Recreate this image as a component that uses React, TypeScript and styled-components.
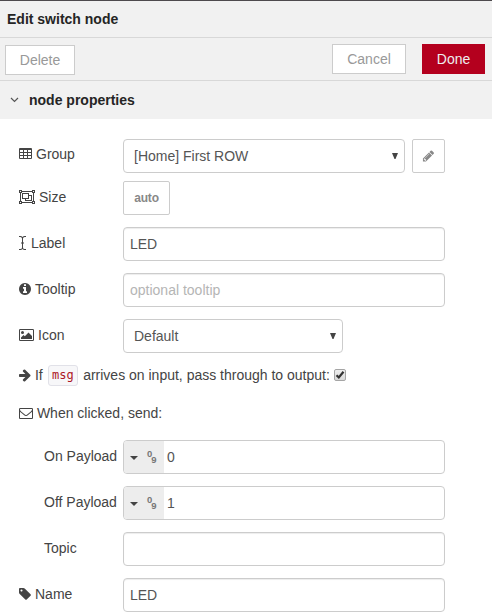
import React from 'react';
import styled, { createGlobalStyle } from 'styled-components';

const GlobalStyle = createGlobalStyle`
  *, *::before, *::after { box-sizing: border-box; }
  body {
    margin: 0;
    background: #fff;
    color: #444;
    font: 14px/20px "Liberation Sans", Arial, sans-serif;
  }
  input, button { font: inherit; }
`;

const Tray = styled.div`
  height: 616px;
  overflow: hidden;
  border-top: 1px solid #4d4a4d;
`;

const Title = styled.header`
  height: 37px;
  padding: 8px 7px;
  background: #f1f1f1;
  border-bottom: 1px solid #d8d8d8;
  color: #252525;
  font-weight: bold;
`;

const Toolbar = styled.div`
  display: flex;
  align-items: flex-start;
  height: 43px;
  padding: 6px 7px 0 5px;
  background: #f1f1f1;
  border-bottom: 1px solid #d8d8d8;
`;

const Button = styled.button<{ $primary?: boolean; $width: number }>`
  width: ${p => p.$width}px;
  height: 30px;
  padding: 0;
  border: 1px solid ${p => (p.$primary ? '#b4001e' : '#ccc')};
  background: ${p => (p.$primary ? '#b4001e' : '#fff')};
  color: ${p => (p.$primary ? '#eee' : '#999')};
`;

const DeleteButton = styled(Button)`
  margin: 1px auto 0 0;
`;

const DoneButton = styled(Button)`
  margin-left: 16px;
`;

const SectionHeader = styled.div`
  display: flex;
  align-items: center;
  gap: 10px;
  height: 38px;
  padding-left: 10px;
  background: #f1f1f1;
  color: #252525;
  font-weight: bold;
`;

const Form = styled.form`
  padding: 20px 47px 0 19px;
`;

const Row = styled.div<{ $gap?: number }>`
  display: flex;
  align-items: center;
  height: 34px;
  margin-bottom: ${p => p.$gap ?? 12}px;
`;

const Label = styled.label<{ $nested?: boolean; $raise?: number; $gap?: number }>`
  display: flex;
  align-items: center;
  gap: ${p => p.$gap ?? 4}px;
  flex: 0 0 104px;
  padding-left: ${p => (p.$nested ? 25 : 0)}px;
  margin-top: -${p => p.$raise ?? 2}px;
  white-space: nowrap;
`;

const Line = styled.div<{ $gap: number }>`
  display: flex;
  align-items: center;
  height: 20px;
  margin-bottom: ${p => p.$gap}px;
  white-space: pre;
`;

const Glyph = styled.svg`
  display: block;
  flex: none;
  height: 14px;
  fill: currentColor;
`;

const TextInput = styled.input`
  width: 322px;
  height: 34px;
  padding: 0 6px;
  border: 1px solid #ccc;
  border-radius: 4px;
  background: #fff;
  box-shadow: inset 0 1px 1px rgba(0, 0, 0, 0.075);
  color: #555;
  outline: none;
  &::placeholder { color: #b5b5b5; opacity: 1; }
`;

const Select = styled.div<{ $width: number }>`
  display: flex;
  align-items: center;
  justify-content: space-between;
  width: ${p => p.$width}px;
  height: 34px;
  padding: 0 6px 0 10px;
  border: 1px solid #ccc;
  border-radius: 4px;
  color: #555;
`;

const SmallButton = styled.button<{ $width: number; $left?: number }>`
  display: flex;
  align-items: center;
  justify-content: center;
  width: ${p => p.$width}px;
  height: 34px;
  margin-left: ${p => p.$left ?? 0}px;
  padding: 0;
  border: 1px solid #ccc;
  border-radius: 2px;
  background: #fff;
  color: #888;
  font-size: 12px;
  font-weight: bold;
  letter-spacing: -0.15px;
`;

const TypedInput = styled.div`
  display: flex;
  width: 322px;
  height: 34px;
  border: 1px solid #ccc;
  border-radius: 4px;
  overflow: hidden;
`;

const TypeMenu = styled.span`
  display: flex;
  align-items: center;
  gap: 9px;
  width: 40px;
  padding: 2px 0 0 6px;
  background: #ededed;
`;

const Digits = styled.span`
  display: flex;
  width: 12px;
  height: 18px;
  color: #777;
  font-size: 9.5px;
  font-weight: bold;
  line-height: 10px;
`;

const LowDigit = styled.span`
  margin-top: 6px;
  margin-left: -1px;
`;

const TypedValue = styled.span`
  padding: 6px 3px;
  color: #555;
`;

const Code = styled.code`
  height: 21px;
  margin: 1px 1px 0 1px;
  padding: 0 3.5px;
  border: 1px solid #e1e1e8;
  border-radius: 3px;
  background: #f7f7f9;
  color: #ad1625;
  font: 12px/18px "DejaVu Sans Mono", monospace;
`;

const CheckBox = styled.span`
  display: flex;
  width: 12px;
  height: 12px;
  margin-left: 4px;
  border: 1px solid #a5a5a5;
  border-radius: 2px;
  background: linear-gradient(#eee, #d9d9d9);
`;

const Mark = styled.svg`
  display: block;
  flex: none;
`;

const TableIcon = () => (
  <Glyph width="13" viewBox="0 1 13 14">
    <path fillRule="evenodd" d="M1 2h11a1 1 0 0 1 1 1v9a1 1 0 0 1-1 1H1a1 1 0 0 1-1-1V3a1 1 0 0 1 1-1zM1 4v2h3v-2zM5 4v2h3v-2zM9 4v2h3v-2zM1 7v2h3v-2zM5 7v2h3v-2zM9 7v2h3v-2zM1 10v2h3v-2zM5 10v2h3v-2zM9 10v2h3v-2z" />
  </Glyph>
);

const GroupIcon = () => (
  <Glyph width="16" viewBox="0 0 16 14">
    <path fillRule="evenodd" d="M0 0h3v1h10V0h3v3h-1v8h1v3h-3v-1H3v1H0v-3h1V3H0zM3 2v1H2v8h1v1h10v-1h1V3h-1V2zM1 1v1h1V1zM14 1v1h1V1zM1 12v1h1v-1zM14 12v1h1v-1zM3 3h7v2h3v6H6V9H3zM4 4v4h5V4zM10 6v3H7v1h5V6z" />
  </Glyph>
);

const CursorIcon = () => (
  <Glyph width="7" viewBox="0 0 7 14">
    <path d="M0 0h1.3Q2.8 0 3.5.9 4.2 0 5.7 0H7v1H5.7Q4 1 4 2.6V6.5h1v1H4v3.9Q4 13 5.7 13H7v1H5.7q-1.500 0-2.200-.9-.7.9-2.200.9H0v-1h1.300Q3 13 3 11.400V7.500H2v-1h1V2.600Q3 1 1.300 1H0z" />
  </Glyph>
);

const InfoIcon = () => (
  <Glyph width="12" viewBox="128 0 1536 1792">
    <path d="M1152 1376v-160q0-14-9-23t-23-9h-96v-512q0-14-9-23t-23-9h-320q-14 0-23 9t-9 23v160q0 14 9 23t23 9h96v320h-96q-14 0-23 9t-9 23v160q0 14 9 23t23 9h448q14 0 23-9t9-23zm-128-896v-160q0-14-9-23t-23-9h-192q-14 0-23 9t-9 23v160q0 14 9 23t23 9h192q14 0 23-9t9-23zm640 416q0 209-103 385.500t-279.500 279.500-385.500 103-385.500-103-279.500-279.500-103-385.500 103-385.500 279.500-279.500 385.500-103 385.500 103 279.500 279.500 103 385.500z" />
  </Glyph>
);

const PictureIcon = () => (
  <Glyph width="15" viewBox="0 0 15 14">
    <path fillRule="evenodd" d="M1.200 1h12.600Q15 1 15 2.200v9.600q0 1.200-1.200 1.200H1.200Q0 13 0 11.800V2.200Q0 1 1.200 1zM1.200 2q-.2 0-.2.200v9.600q0 .2.200.2h12.600q.2 0 .2-.2V2.200q0-.2-.2-.2z" />
    <circle cx="3.500" cy="4.500" r="1.500" />
    <path d="M2 11V9.500L4.500 7l1.300 1.200L9.500 4.500 13 8v3z" />
  </Glyph>
);

const ArrowIcon = () => (
  <Glyph width="12" viewBox="128 0 1536 1792">
    <path d="M1600 960q0 54-37 91l-651 651q-39 37-91 37-51 0-90-37l-75-75q-38-38-38-91t38-91l293-293h-704q-52 0-84.500-37.500t-32.500-90.500v-128q0-53 32.500-90.500t84.500-37.500h704l-293-294q-38-36-38-90t38-90l75-75q38-38 90-38 53 0 91 38l651 651q37 35 37 90z" />
  </Glyph>
);

const EnvelopeIcon = () => (
  <Glyph width="14" viewBox="0 0 1792 1792">
    <path d="M1664 1504v-768q-32 36-69 66-268 206-426 338-51 43-83 67t-86.500 48.500-102.500 24.500h-2q-48 0-102.500-24.500t-86.500-48.500-83-67q-158-132-426-338-37-30-69-66v768q0 13 9.500 22.500t22.500 9.500h1472q13 0 22.500-9.500t9.500-22.500zm0-1051v-24.500l-.5-13-3-12.500-5.500-9-9-7.500-14-2.500h-1472q-13 0-22.500 9.500t-9.500 22.500q0 168 147 284 193 152 401 317 6 5 35 29.500t46 37.500 44.500 31.500 50.500 27.500 43 9h2q20 0 43-9t50.500-27.500 44.500-31.500 46-37.500 35-29.500q208-165 401-317 54-43 100.500-115.500t46.500-131.500zm128-37v1088q0 66-47 113t-113 47h-1472q-66 0-113-47t-47-113v-1088q0-66 47-113t113-47h1472q66 0 113 47t47 113z" />
  </Glyph>
);

const TagIcon = () => (
  <Glyph width="12" viewBox="128 0 1536 1792">
    <path d="M576 448q0-53-37.500-90.500t-90.500-37.500-90.500 37.500-37.500 90.500 37.500 90.500 90.500 37.500 90.500-37.500 37.500-90.500zm1067 576q0 53-37 90l-491 492q-39 37-91 37-53 0-90-37l-715-716q-38-37-64.500-101t-26.500-117v-416q0-52 38-90t90-38h416q53 0 117 26.500t102 64.500l715 714q37 39 37 91z" />
  </Glyph>
);

const PencilIcon = () => (
  <Mark width="14" height="14" viewBox="0 0 1920 1792" fill="currentColor">
    <path d="M491 1536l91-91-235-235-91 91v107h128v128h107zm523-928q0-22-22-22-10 0-17 7l-542 542q-7 7-7 17 0 22 22 22 10 0 17-7l542-542q7-7 7-17zm-54-192l416 416-832 832h-416v-416zm683 96q0 53-37 90l-166 166-416-416 166-165q36-38 90-38 53 0 91 38l235 234q37 39 37 91z" />
  </Mark>
);

const ChevronIcon = () => (
  <Mark width="9" height="6" viewBox="0 0 9 6" fill="none" stroke="#555" strokeWidth="1.200">
    <path d="M1 1l3.500 3.500L8 1" />
  </Mark>
);

const SelectArrow = () => (
  <Mark width="6" height="6" viewBox="0 0 6 6" fill="#444">
    <path d="M0 0h6L3.500 6h-1z" />
  </Mark>
);

const Typed = ({ value }: { value: string }) => (
  <TypedInput>
    <TypeMenu>
      <Mark width="8" height="4" viewBox="0 0 8 4" fill="#444"><path d="M0 0h8L4 4z" /></Mark>
      <Digits><span>0</span><LowDigit>9</LowDigit></Digits>
    </TypeMenu>
    <TypedValue>{value}</TypedValue>
  </TypedInput>
);

export default function App() {
  return (
    <>
      <GlobalStyle />
      <Tray>
        <Title>Edit switch node</Title>
        <Toolbar>
          <DeleteButton $width={70}>Delete</DeleteButton>
          <Button $width={74}>Cancel</Button>
          <DoneButton $primary $width={63}>Done</DoneButton>
        </Toolbar>
        <SectionHeader><ChevronIcon />node properties</SectionHeader>
        <Form>
          <Row $gap={8}>
            <Label $raise={4}><TableIcon />Group</Label>
            <Select $width={282}>[Home] First ROW<SelectArrow /></Select>
            <SmallButton type="button" $width={33} $left={7}><PencilIcon /></SmallButton>
          </Row>
          <Row>
            <Label><GroupIcon />Size</Label>
            <SmallButton type="button" $width={47}>auto</SmallButton>
          </Row>
          <Row>
            <Label $gap={5}><CursorIcon />Label</Label>
            <TextInput defaultValue="LED" />
          </Row>
          <Row>
            <Label><InfoIcon />Tooltip</Label>
            <TextInput placeholder="optional tooltip" />
          </Row>
          <Row>
            <Label><PictureIcon />Icon</Label>
            <Select $width={220}>Default<SelectArrow /></Select>
          </Row>
          <Line $gap={18}>
            <ArrowIcon />
            <span> If </span>
            <Code>msg</Code>
            <span> arrives on input, pass through to output:</span>
            <CheckBox>
              <Mark width="10" height="10" viewBox="0 0 10 10" fill="none" stroke="#333" strokeWidth="2.200">
                <path d="M1.500 5.300l2.300 2.200L8.500 1.700" />
              </Mark>
            </CheckBox>
          </Line>
          <Line $gap={17}><EnvelopeIcon /><span> When clicked, send:</span></Line>
          <Row>
            <Label $nested>On Payload</Label>
            <Typed value="0" />
          </Row>
          <Row>
            <Label $nested>Off Payload</Label>
            <Typed value="1" />
          </Row>
          <Row>
            <Label $nested>Topic</Label>
            <TextInput />
          </Row>
          <Row>
            <Label><TagIcon />Name</Label>
            <TextInput defaultValue="LED" />
          </Row>
        </Form>
      </Tray>
    </>
  );
}
